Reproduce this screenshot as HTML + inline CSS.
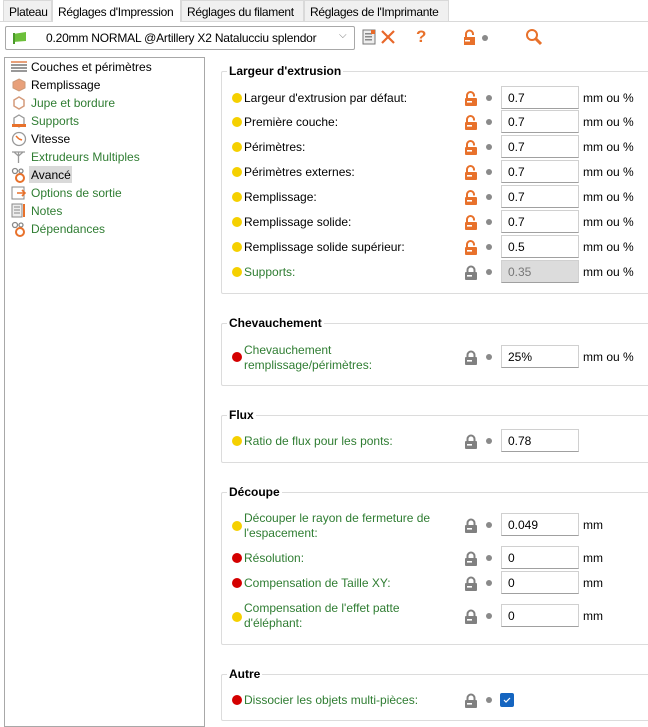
<!DOCTYPE html>
<html><head><meta charset="utf-8"><style>
*{margin:0;padding:0;box-sizing:border-box}
body{width:648px;height:723px;background:#fff;font-family:"Liberation Sans",sans-serif;font-size:12px;color:#000;position:relative;overflow:hidden}
.a{position:absolute;white-space:nowrap}
.g{color:#2f7d32}
.tab{position:absolute;top:0;height:21px;border:1px solid #d9d9d9;border-bottom:none;background:#f0f0f0;padding:4px 0 0 5px;font-size:12px;white-space:nowrap;overflow:hidden;letter-spacing:-0.3px}
.box{position:absolute;left:221px;right:-2px;border:1px solid #dcdcdc;border-radius:2px}
.gt{position:absolute;font-weight:bold;background:#fff;padding:0 2px;left:227px}
.dy{position:absolute;width:10px;height:10px;border-radius:50%;background:#f5d000;left:232px}
.dr{position:absolute;width:10px;height:10px;border-radius:50%;background:#d40000;left:232px}
.gd{position:absolute;width:6px;height:6px;border-radius:50%;background:#8a8a8a;left:486px}
.in{position:absolute;left:501px;width:78px;height:23px;border:1px solid #d0d0d0;border-bottom:1px solid #a0a0a0;padding:4px 0 0 6px;background:#fff}
.lk{position:absolute;left:464px}
.li{position:absolute;left:31px}
</style></head><body>
<div style="position:absolute;left:0;top:21px;width:648px;height:1px;background:#d9d9d9"></div>
<div class="tab" style="left:3px;width:49px">Plateau</div>
<div class="tab" style="left:52px;width:129px;top:-1px;height:23px;background:#fff;padding-top:5px">Réglages d'Impression</div>
<div class="tab" style="left:181px;width:123px">Réglages du filament</div>
<div class="tab" style="left:304px;width:145px">Réglages de l'Imprimante</div>
<div style="position:absolute;left:5px;top:26px;width:350px;height:24px;border:1px solid #a8a8a8;border-radius:2px"></div>
<svg class="a" style="left:12px;top:31px" width="16" height="14"><path d="M1 3 L14 1 L14 10 L1 11 Z" fill="#6cbf3a"/><rect x="1" y="2" width="2" height="11" fill="#4a9a2a"/></svg>
<div class="a" style="left:46px;top:31px;font-size:12px;letter-spacing:-0.2px">0.20mm NORMAL @Artillery X2 Natalucciu splendor</div>
<div class="a" style="left:339px;top:30px;color:#777;font-size:10px">⌵</div>
<svg class="a" style="left:362px;top:29px" width="14" height="16"><rect x="1" y="1" width="12" height="14" fill="#eee" stroke="#777"/><rect x="3" y="4" width="7" height="1.5" fill="#888"/><rect x="3" y="7" width="7" height="1.5" fill="#888"/><rect x="3" y="10" width="7" height="1.5" fill="#888"/><rect x="9" y="1" width="4" height="4" fill="#e86a2a"/></svg>
<svg class="a" style="left:380px;top:29px" width="16" height="16"><path d="M2 2 L14 14 M14 2 L2 14" stroke="#e8672a" stroke-width="2.2"/></svg>
<div class="a" style="left:416px;top:27px;color:#e8712b;font-size:17px;font-weight:bold">?</div>
<svg class="a" style="left:462px;top:29px" width="16" height="16"><path d="M4 8 V5 A3.5 3.5 0 0 1 11 5 V6" stroke="#e8712b" stroke-width="2" fill="none"/><rect x="2" y="8" width="11" height="8" fill="#e8712b"/><rect x="3" y="11" width="5" height="1.5" fill="#fff"/></svg>
<div class="a" style="left:482px;top:35px;width:6px;height:6px;border-radius:50%;background:#8a8a8a"></div>
<svg class="a" style="left:525px;top:28px" width="18" height="18"><circle cx="7" cy="7" r="5" stroke="#e8712b" stroke-width="2" fill="none"/><path d="M10.5 10.5 L16 16" stroke="#e8712b" stroke-width="3"/></svg>

<div style="position:absolute;left:4px;top:57px;width:201px;height:670px;border:1px solid #a8a8a8"></div>
<svg class="a" style="left:11px;top:60px" width="16" height="14"><g fill="#999"><rect y="1" width="16" height="2" fill="#e8a07a"/><rect y="4" width="16" height="2"/><rect y="7" width="16" height="2"/><rect y="10" width="16" height="2"/></g></svg>
<div class="li a" style="top:60px">Couches et périmètres</div>
<svg class="a" style="left:11px;top:78px" width="16" height="14"><polygon points="8,1 14,4 14,10 8,13 2,10 2,4" fill="#e8a07a" stroke="#c97" /></svg>
<div class="li a" style="top:78px">Remplissage</div>
<svg class="a" style="left:11px;top:96px" width="16" height="14"><polygon points="8,1 13,4 13,10 8,13 3,10 3,4" fill="none" stroke="#d49a7a" stroke-width="1.5"/></svg>
<div class="li a g" style="top:96px">Jupe et bordure</div>
<svg class="a" style="left:11px;top:114px" width="16" height="14"><polygon points="8,1 13,4 13,10 8,13 3,10 3,4" fill="none" stroke="#999" stroke-width="1.3"/><rect x="1" y="10" width="14" height="3" fill="#e8712b"/></svg>
<div class="li a g" style="top:114px">Supports</div>
<svg class="a" style="left:11px;top:131px" width="16" height="16"><circle cx="8" cy="8" r="6.5" fill="none" stroke="#999" stroke-width="1.3"/><path d="M8 8 L5 5 M8 8 L11 9" stroke="#e8712b" stroke-width="1.5"/></svg>
<div class="li a" style="top:132px">Vitesse</div>
<svg class="a" style="left:11px;top:150px" width="16" height="14"><path d="M1 2 H14 M7.5 2 V13 M3 2 L7.5 6 L12 2" stroke="#999" stroke-width="1.3" fill="none"/></svg>
<div class="li a g" style="top:150px">Extrudeurs Multiples</div>
<div class="a" style="left:29px;top:166px;width:43px;height:17px;background:#d9d9d9"></div>
<svg class="a" style="left:11px;top:167px" width="16" height="16"><circle cx="4" cy="4" r="2.5" fill="none" stroke="#888" stroke-width="1.3"/><circle cx="10" cy="4" r="2" fill="none" stroke="#888" stroke-width="1.3"/><circle cx="9" cy="11" r="4" fill="none" stroke="#e8712b" stroke-width="2"/></svg>
<div class="li a" style="top:168px">Avancé</div>
<svg class="a" style="left:11px;top:185px" width="16" height="16"><rect x="1" y="2" width="12" height="12" fill="none" stroke="#888"/><path d="M6 8 H14 M11 5 L14 8 L11 11" stroke="#e8712b" stroke-width="1.6" fill="none"/></svg>
<div class="li a g" style="top:186px">Options de sortie</div>
<svg class="a" style="left:11px;top:203px" width="16" height="16"><rect x="1" y="1" width="10" height="13" fill="#eee" stroke="#888"/><path d="M3 4 H9 M3 7 H9 M3 10 H9" stroke="#888"/><rect x="12" y="1" width="2" height="13" fill="#e8712b"/></svg>
<div class="li a g" style="top:204px">Notes</div>
<svg class="a" style="left:11px;top:221px" width="16" height="16"><circle cx="4" cy="4" r="2.5" fill="none" stroke="#888" stroke-width="1.3"/><circle cx="10" cy="4" r="2" fill="none" stroke="#888" stroke-width="1.3"/><circle cx="9" cy="11" r="4" fill="none" stroke="#e8712b" stroke-width="2"/></svg>
<div class="li a g" style="top:222px">Dépendances</div>

<div class="box" style="top:71px;height:223px"></div><div class="gt" style="top:64px">Largeur d'extrusion</div>
<div class="box" style="top:323px;height:63px"></div><div class="gt" style="top:316px">Chevauchement</div>
<div class="box" style="top:415px;height:48px"></div><div class="gt" style="top:408px">Flux</div>
<div class="box" style="top:492px;height:153px"></div><div class="gt" style="top:485px">Découpe</div>
<div class="box" style="top:674px;height:47px"></div><div class="gt" style="top:667px">Autre</div>

<svg width="0" height="0" style="position:absolute"><defs>
<symbol id="lo" viewBox="0 0 14 15"><path d="M3 8 V4.5 A3.5 3.5 0 0 1 10 4.5 V5.5" stroke="#e8712b" stroke-width="2" fill="none"/><rect x="1" y="7" width="12" height="8" rx="1" fill="#e8712b"/><rect x="3" y="10" width="5" height="1.6" fill="#fff"/></symbol>
<symbol id="lc" viewBox="0 0 14 15"><path d="M3.5 8 V5 A3.5 3.5 0 0 1 10.5 5 V8" stroke="#808080" stroke-width="2" fill="none"/><rect x="1" y="7" width="12" height="8" rx="1" fill="#808080"/><rect x="3" y="10" width="5" height="1.6" fill="#fff"/></symbol>
</defs></svg>

<div class="dy" style="top:93px"></div><div class="a" style="left:244px;top:91px">Largeur d'extrusion par défaut:</div><svg class="lk" style="top:91px" width="14" height="15"><use href="#lo"/></svg><div class="gd" style="top:95px"></div><div class="in" style="top:86px">0.7</div><div class="a" style="left:583px;top:91px">mm ou %</div>
<div class="dy" style="top:117px"></div><div class="a" style="left:244px;top:115px">Première couche:</div><svg class="lk" style="top:115px" width="14" height="15"><use href="#lo"/></svg><div class="gd" style="top:119px"></div><div class="in" style="top:110px">0.7</div><div class="a" style="left:583px;top:115px">mm ou %</div>
<div class="dy" style="top:142px"></div><div class="a" style="left:244px;top:140px">Périmètres:</div><svg class="lk" style="top:140px" width="14" height="15"><use href="#lo"/></svg><div class="gd" style="top:144px"></div><div class="in" style="top:135px">0.7</div><div class="a" style="left:583px;top:140px">mm ou %</div>
<div class="dy" style="top:167px"></div><div class="a" style="left:244px;top:165px">Périmètres externes:</div><svg class="lk" style="top:165px" width="14" height="15"><use href="#lo"/></svg><div class="gd" style="top:169px"></div><div class="in" style="top:160px">0.7</div><div class="a" style="left:583px;top:165px">mm ou %</div>
<div class="dy" style="top:192px"></div><div class="a" style="left:244px;top:190px">Remplissage:</div><svg class="lk" style="top:190px" width="14" height="15"><use href="#lo"/></svg><div class="gd" style="top:194px"></div><div class="in" style="top:185px">0.7</div><div class="a" style="left:583px;top:190px">mm ou %</div>
<div class="dy" style="top:217px"></div><div class="a" style="left:244px;top:215px">Remplissage solide:</div><svg class="lk" style="top:215px" width="14" height="15"><use href="#lo"/></svg><div class="gd" style="top:219px"></div><div class="in" style="top:210px">0.7</div><div class="a" style="left:583px;top:215px">mm ou %</div>
<div class="dy" style="top:242px"></div><div class="a" style="left:244px;top:240px">Remplissage solide supérieur:</div><svg class="lk" style="top:240px" width="14" height="15"><use href="#lo"/></svg><div class="gd" style="top:244px"></div><div class="in" style="top:235px">0.5</div><div class="a" style="left:583px;top:240px">mm ou %</div>
<div class="dy" style="top:267px"></div><div class="a g" style="left:244px;top:265px">Supports:</div><svg class="lk" style="top:265px" width="14" height="15"><use href="#lc"/></svg><div class="gd" style="top:269px"></div><div class="in" style="top:260px;background:#dcdcdc;color:#777">0.35</div><div class="a" style="left:583px;top:265px">mm ou %</div>

<div class="dr" style="top:352px"></div><div class="a g" style="left:244px;top:343px;line-height:15px">Chevauchement<br>remplissage/périmètres:</div><svg class="lk" style="top:350px" width="14" height="15"><use href="#lc"/></svg><div class="gd" style="top:354px"></div><div class="in" style="top:345px">25%</div><div class="a" style="left:583px;top:350px">mm ou %</div>

<div class="dy" style="top:436px"></div><div class="a g" style="left:244px;top:434px">Ratio de flux pour les ponts:</div><svg class="lk" style="top:434px" width="14" height="15"><use href="#lc"/></svg><div class="gd" style="top:438px"></div><div class="in" style="top:429px">0.78</div>

<div class="dy" style="top:521px"></div><div class="a g" style="left:244px;top:511px;line-height:15px">Découper le rayon de fermeture de<br>l'espacement:</div><svg class="lk" style="top:518px" width="14" height="15"><use href="#lc"/></svg><div class="gd" style="top:522px"></div><div class="in" style="top:513px">0.049</div><div class="a" style="left:583px;top:518px">mm</div>
<div class="dr" style="top:553px"></div><div class="a g" style="left:244px;top:551px">Résolution:</div><svg class="lk" style="top:551px" width="14" height="15"><use href="#lc"/></svg><div class="gd" style="top:555px"></div><div class="in" style="top:546px">0</div><div class="a" style="left:583px;top:551px">mm</div>
<div class="dr" style="top:578px"></div><div class="a g" style="left:244px;top:576px">Compensation de Taille XY:</div><svg class="lk" style="top:576px" width="14" height="15"><use href="#lc"/></svg><div class="gd" style="top:580px"></div><div class="in" style="top:571px">0</div><div class="a" style="left:583px;top:576px">mm</div>
<div class="dy" style="top:612px"></div><div class="a g" style="left:244px;top:601px;line-height:15px">Compensation de l'effet patte<br>d'éléphant:</div><svg class="lk" style="top:609px" width="14" height="15"><use href="#lc"/></svg><div class="gd" style="top:613px"></div><div class="in" style="top:604px">0</div><div class="a" style="left:583px;top:609px">mm</div>

<div class="dr" style="top:695px"></div><div class="a g" style="left:244px;top:693px">Dissocier les objets multi-pièces:</div><svg class="lk" style="top:693px" width="14" height="15"><use href="#lc"/></svg><div class="gd" style="top:697px"></div>
<svg class="a" style="left:500px;top:693px" width="14" height="14"><rect width="14" height="14" rx="2" fill="#1565c0"/><path d="M4 7 L6 9 L10 5" stroke="#fff" stroke-width="1.2" fill="none"/></svg>
</body></html>
